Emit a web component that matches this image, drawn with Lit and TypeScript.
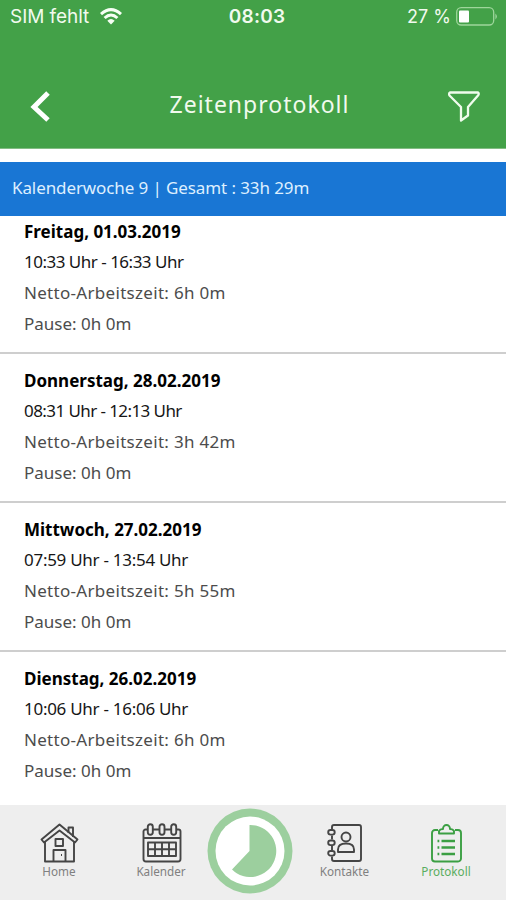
import { LitElement, html, css, svg } from "lit";
import { customElement } from "lit/decorators.js";
import { styleMap } from "lit/directives/style-map.js";

interface Day {
  title: string;
  time: string;
  net: string;
  pause: string;
  tracking: number;
}

const days: Day[] = [
  { title: "Freitag, 01.03.2019", time: "10:33 Uhr - 16:33 Uhr", net: "6h 0m", pause: "0h 0m", tracking: -0.5 },
  { title: "Donnerstag, 28.02.2019", time: "08:31 Uhr - 12:13 Uhr", net: "3h 42m", pause: "0h 0m", tracking: -0.58 },
  { title: "Mittwoch, 27.02.2019", time: "07:59 Uhr - 13:54 Uhr", net: "5h 55m", pause: "0h 0m", tracking: -0.28 },
  { title: "Dienstag, 26.02.2019", time: "10:06 Uhr - 16:06 Uhr", net: "6h 0m", pause: "0h 0m", tracking: -0.28 },
];

const homeIcon = svg`
  <path d="M28.500 10V4.500h4.500v9.500"/>
  <path d="M5 18v20.500h29V18"/>
  <path d="M19.500 1.500L1.500 16.500l2.500 3L19.500 7.500l15.500 12 2.500-3z"/>
  <path d="M15.500 16h7.500v7h-7.500zM13.500 38.500V27h12v11.500"/><path d="M21 32h1"/>`;

const calendarIcon = svg`
  <path d="M5 6.500H3.500a2 2 0 0 0-2 2v27.500a2.500 2.500 0 0 0 2.500 2.500h32a2.500 2.500 0 0 0 2.500-2.500V8.500a2 2 0 0 0-2-2H35M11 6.500h6M23 6.500h6M1.500 15h37"/>
  <rect x="5.800" y="1.200" width="5" height="10.500" rx="2.500"/><rect x="17.500" y="1.200" width="5" height="10.500" rx="2.500"/><rect x="29.200" y="1.200" width="5" height="10.500" rx="2.500"/>
  <path d="M6 19.500h28v13.500H6zM6 26.200h28M13 19.500V33M20 19.500V33M27 19.500V33"/>`;

const contactsIcon = svg`
  <path d="M5 6V4a2 2 0 0 1 2-2h25a2 2 0 0 1 2 2v32a2 2 0 0 1-2 2H7a2 2 0 0 1-2-2v-2.500M5 12.500v4M5 23v4"/>
  <rect x="1.200" y="7" width="6.500" height="4.600" rx="2.300"/><rect x="1.200" y="17.500" width="6.500" height="4.600" rx="2.300"/><rect x="1.200" y="28" width="6.500" height="4.600" rx="2.300"/>
  <circle cx="19" cy="14" r="4.500"/><path d="M11 29v-2.500c0-4 3-6 8-6s8 2 8 6V29z"/>`;

const protocolIcon = svg`
  <path d="M8 7H5a3 3 0 0 0-3 3v25.500a3 3 0 0 0 3 3h23a3 3 0 0 0 3-3V10a3 3 0 0 0-3-3h-3"/>
  <path d="M9 10.500V8q1-2 4-2a3.500 4 0 0 1 7 0q3 0 4 2v2.500z"/>
  <path d="M11.500 18h13.500M11.500 24.500h13.500M11.500 31h13.500M7.500 18h1.800M7.500 24.500h1.800M7.500 31h1.800" stroke-width="2.400"/>`;

@customElement("app-root")
export class AppRoot extends LitElement {
  static styles = css`
    :host {
      display: flex;
      flex-direction: column;
      height: 900px;
      overflow: hidden;
      background: #fff;
      font-family: "Noto Sans", "Open Sans", sans-serif;
      color: #000;
      white-space: nowrap;
    }
    svg { display: block; flex: none; }
    header {
      flex: none;
      box-sizing: border-box;
      height: 149px;
      background: #43a148;
      border-bottom: 1px solid #82bd83;
      color: #f1faee;
    }
    .status {
      display: grid;
      grid-template-columns: 1fr auto 1fr;
      align-items: center;
      height: 33px;
      padding: 0 8px 0 10px;
      font: 19px/33px Inter, sans-serif;
    }
    .left, .right { display: flex; align-items: center; }
    .left { gap: 11px; font-size: 19px; letter-spacing: -0.050px; }
    .right { justify-content: flex-end; gap: 5px; font-size: 18px; }
    .clock { font-weight: 600; letter-spacing: 0.2px; padding-left: 6px; }
    .title {
      display: grid;
      grid-template-columns: 32px 1fr 34px;
      align-items: center;
      height: 32px;
      padding: 0 25px 0 27px;
      margin-top: 55px;
    }
    h1 {
      margin: 0;
      padding: 0 0 4px 13px;
      text-align: center;
      font-size: 23px;
      font-weight: 400;
      line-height: 32px;
      letter-spacing: 1px;
    }
    .week {
      flex: none;
      box-sizing: border-box;
      height: 54px;
      margin-top: 12.500px;
      padding-left: 12px;
      background: #1976d4;
      color: #deefff;
      font-size: 17px;
      line-height: 51px;
      letter-spacing: -0.100px;
    }
    main { flex: 1; min-height: 0; overflow: hidden; }
    .day {
      box-sizing: border-box;
      height: 149px;
      padding: 11px 24px 0;
      border-bottom: 2px solid #cecece;
      font-size: 17px;
      line-height: 31px;
      color: #4c4c4c;
    }
    .day:first-child { height: 138px; padding-top: 0; }
    .day:last-child { border-bottom: 0; }
    .name { font-weight: 700; color: #000; line-height: 32px; margin-bottom: -2px; }
    .time { color: #161616; }
    .net { letter-spacing: 0.300px; }
    nav {
      flex: none;
      display: grid;
      grid-template-columns: 118px 86px 91px 99px 104px;
      height: 95px;
      background: #eee;
    }
    .tab {
      display: flex;
      flex-direction: column;
      align-items: center;
      padding-top: 18px;
      color: #454545;
      font-size: 11.700px;
      line-height: 16px;
    }
    .tab svg { margin-left: 1px; }
    .tab span { color: #808080; margin-top: -1px; }
    .tab.active { color: #3b9f43; }
    .tab.active span { color: #5aad60; }
    .timer { padding: 3px 0 0 3px; }
  `;

  private tab(label: string, icon: unknown, box: string, width: number, cls = "") {
    return html`<div class="tab ${cls}">
      <svg width=${width} height="41" viewBox=${box} fill="none" stroke="currentColor" stroke-width="1.900" stroke-linejoin="round">${icon}</svg>
      <span>${label}</span>
    </div>`;
  }

  render() {
    return html`
      <header>
        <div class="status">
          <div class="left"><span>SIM fehlt</span>
            <svg width="22" height="17" viewBox="0 0 22 17" fill="none" stroke="#f6fff4" stroke-width="3">
              <path d="M1 6.200Q11-3 21 6.200M4.600 10Q11 4 17.400 10"/>
              <path d="M7.300 12.700Q11 9.500 14.700 12.700L11 16.500z" fill="#f6fff4" stroke="none"/>
            </svg>
          </div>
          <span class="clock">08:03</span>
          <div class="right"><span>27 %</span>
            <svg width="42" height="19" viewBox="0 0 42 19">
              <rect x=".7" y=".7" width="37" height="17.300" rx="4.500" fill="none" stroke="#9ed69b" stroke-width="1.300"/>
              <rect x="3" y="3.500" width="10" height="12" rx="1" fill="#fff"/>
              <path d="M39.500 6.500q2.500 3 0 6z" fill="#b5dfb2"/>
            </svg>
          </div>
        </div>
        <div class="title">
          <svg width="26" height="32" viewBox="0 0 26 32" fill="none" stroke="#fff" stroke-width="5"><path d="M21 3L7 17l14 13"/></svg>
          <h1>Zeitenprotokoll</h1>
          <svg width="34" height="32" viewBox="0 0 34 32" fill="none" stroke="#effcec" stroke-width="2.300" stroke-linejoin="round"><path d="M3 2.500h28q1.500 1 0 3L21 17v8.500L14 30.500V17L2.500 5.500q-1-2 .5-3z"/></svg>
        </div>
      </header>
      <div class="week">Kalenderwoche 9 | Gesamt : 33h 29m</div>
      <main>
        ${days.map((d) => html`<section class="day">
          <div class="name">${d.title}</div>
          <div class="time" style=${styleMap({ letterSpacing: `${d.tracking}px` })}>${d.time}</div>
          <div class="net">Netto-Arbeitszeit: ${d.net}</div>
          <div>Pause: ${d.pause}</div>
        </section>`)}
      </main>
      <nav>
        ${this.tab("Home", homeIcon, "0 0 39 41", 39)}
        ${this.tab("Kalender", calendarIcon, "0 0 40 41", 40)}
        <div class="timer">
          <svg width="86" height="86" viewBox="0 0 86 86">
            <circle cx="43" cy="43" r="42.500" fill="#9ccf9e"/>
            <circle cx="43" cy="43" r="34.500" fill="#fff"/>
            <path d="M42.500 43V17a26 26 0 1 1-17.500 44.500z" fill="#9ccf9e"/>
          </svg>
        </div>
        ${this.tab("Kontakte", contactsIcon, "0 0 36 41", 36)}
        ${this.tab("Protokoll", protocolIcon, "0 0 33 41", 33, "active")}
      </nav>
    `;
  }
}
